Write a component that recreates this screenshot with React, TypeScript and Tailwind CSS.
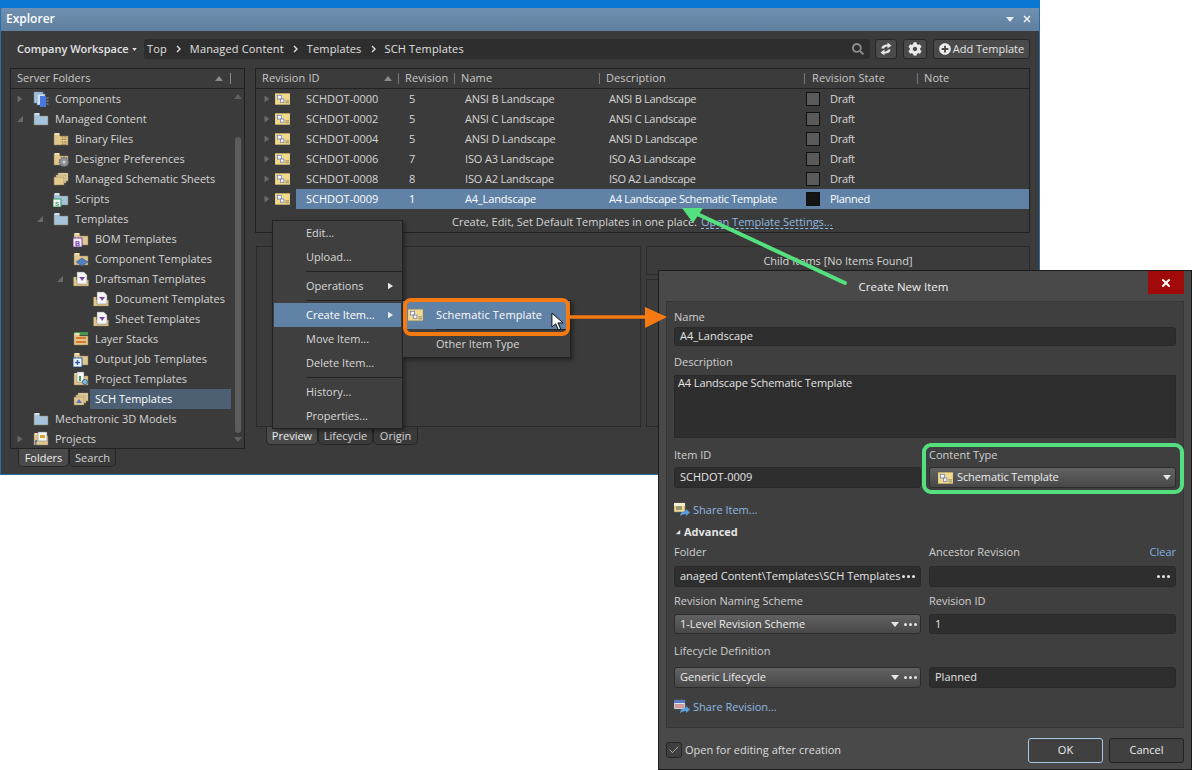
import { Check, X } from "lucide-react";
import { FaCog, FaPlusCircle, FaSearch } from "react-icons/fa";

const Tri = ({ open, fill = "#6a6a6a", className = "w-2 h-2" }: { open?: boolean; fill?: string; className?: string }) => (
  <svg viewBox="0 0 8 8" className={`shrink-0 ${className}`}>
    {open ? <polygon points="7,1 7,7 1,7" fill={fill} /> : <polygon points="1.5,0.5 6.5,4 1.5,7.5" fill={fill} />}
  </svg>
);

const Folder = ({ color = "#e0c78e", tab = "#f0dfb2" }: { color?: string; tab?: string }) => (
  <>
    <path d="M1 3h5l1 2h8v9H1z" fill={color} stroke="#8a7a55" strokeWidth="0.5" />
    <rect x="1.5" y="2" width="5" height="2" fill={tab} />
  </>
);

const TreeIcon = ({ kind }: { kind: string }) => (
  <svg viewBox="0 0 16 16" className="w-4 h-4 shrink-0">
    {kind === "components" && (
      <>
        <rect x="1" y="1" width="9" height="11" fill="#a9c6de" stroke="#5f7f9c" strokeWidth="0.5" />
        <rect x="4" y="3" width="8" height="11" fill="#cfe0ee" stroke="#5f7f9c" strokeWidth="0.5" />
        <rect x="7" y="5" width="6" height="11" fill="#4a78e0" />
        <path d="M13.5 7h2M13.5 10h2M13.5 13h2" stroke="#9aa" strokeWidth="1" />
      </>
    )}
    {kind === "blue" && <Folder color="#a5c4dc" tab="#cfe2f0" />}
    {kind === "binary" && (
      <>
        <Folder />
        <text x="8" y="9" fontSize="5" fill="#8a6a2a" fontFamily="Liberation Sans">10</text>
        <text x="8" y="14" fontSize="5" fill="#8a6a2a" fontFamily="Liberation Sans">10</text>
      </>
    )}
    {kind === "prefs" && (
      <>
        <Folder />
        <circle cx="11" cy="11" r="4.5" fill="#8f9499" stroke="#5b5f63" strokeWidth="1.5" strokeDasharray="1.5 1" />
        <circle cx="11" cy="11" r="1.5" fill="#c8ccd0" />
      </>
    )}
    {kind === "sheets" && (
      <>
        <rect x="5" y="2" width="10" height="8" fill="#f1e0b4" stroke="#8a7a55" strokeWidth="0.5" />
        <rect x="3" y="4" width="10" height="8" fill="#ead49c" stroke="#8a7a55" strokeWidth="0.5" />
        <rect x="1" y="6" width="10" height="8" fill="#e3c98f" stroke="#8a7a55" strokeWidth="0.5" />
      </>
    )}
    {kind === "scripts" && (
      <>
        <Folder color="#a5c4dc" tab="#cfe2f0" />
        <rect x="0" y="8" width="8" height="8" fill="#f4f4f4" stroke="#2f9a5f" />
        <text x="2" y="14.5" fontSize="6" fill="#2f9a5f" fontWeight="bold" fontFamily="Liberation Sans">S</text>
      </>
    )}
    {kind === "bom" && (
      <>
        <Folder />
        <rect x="0" y="7" width="9" height="9" fill="#f4f0f8" stroke="#7a3fa8" />
        <text x="2" y="14.5" fontSize="7" fill="#7a3fa8" fontWeight="bold" fontFamily="Liberation Sans">B</text>
      </>
    )}
    {kind === "comp" && (
      <>
        <Folder />
        <polygon points="9,7 15,11 9,15 3,11" fill="#4f7fc4" stroke="#2f4f80" strokeWidth="0.5" />
      </>
    )}
    {kind === "draft" && (
      <>
        <path d="M0.5 6h3v3h12v6H0.5z" fill="#e0c78e" stroke="#8a7a55" strokeWidth="0.5" />
        <path d="M4 1h7l3 3v9H4z" fill="#f6f6f8" stroke="#777" strokeWidth="0.5" />
        <path d="M6 6h6l-3 4-1-2z" fill="#7a3fa8" />
      </>
    )}
    {kind === "layer" && (
      <>
        <rect x="1" y="1" width="14" height="3" fill="#3f9a4f" />
        <Folder />
        <rect x="3" y="6" width="10" height="2" fill="#d9772b" />
        <rect x="3" y="10" width="10" height="2" fill="#d9772b" />
      </>
    )}
    {kind === "output" && (
      <>
        <Folder />
        <rect x="0" y="7" width="9" height="9" fill="#f4f6fa" stroke="#2a5fb0" />
        <path d="M4.5 9v5M2 11.5h5" stroke="#2a5fb0" strokeWidth="1.5" />
      </>
    )}
    {kind === "project" && (
      <>
        <Folder />
        <rect x="4" y="1" width="7" height="10" fill="#f6f6f8" stroke="#777" strokeWidth="0.5" />
        <rect x="6" y="5" width="2" height="5" fill="#3f9a4f" />
        <circle cx="12" cy="11" r="2.5" fill="#8fb8d8" stroke="#3a6a90" />
      </>
    )}
    {kind === "sch" && (
      <>
        <rect x="5" y="2" width="10" height="8" fill="#f1e0b4" stroke="#8a7a55" strokeWidth="0.5" />
        <rect x="3" y="4" width="10" height="8" fill="#ead49c" stroke="#8a7a55" strokeWidth="0.5" />
        <rect x="1" y="6" width="10" height="8" fill="#e3c98f" stroke="#8a7a55" strokeWidth="0.5" />
        <polygon points="6,8 9,12 3,12" fill="#5a6fc0" />
      </>
    )}
    {kind === "projects" && (
      <>
        <Folder />
        <rect x="5" y="1" width="9" height="9" fill="#f6f6f8" stroke="#777" strokeWidth="0.5" />
        <rect x="7" y="4" width="5" height="3" fill="#d9a62b" />
        <text x="1.5" y="14" fontSize="7" fill="#2a5fb0" fontWeight="bold" fontFamily="Liberation Sans">f</text>
      </>
    )}
  </svg>
);

const SchIcon = () => (
  <svg viewBox="0 0 16 12" className="w-[15px] h-[12px] shrink-0">
    <rect x="0" y="0" width="16" height="12" fill="#f0d98c" stroke="#c4a85e" strokeWidth="0.5" />
    <rect x="2.5" y="2" width="4.5" height="4" fill="#f7f7f7" stroke="#5a6cb8" strokeWidth="0.7" />
    <rect x="6" y="6" width="3.5" height="3.5" fill="#f7f7f7" stroke="#5a6cb8" strokeWidth="0.7" />
    <path d="M11 8h4M11 10h4" stroke="#666" strokeWidth="0.7" />
  </svg>
);

const ShareIcon = ({ calendar }: { calendar?: boolean }) => (
  <svg viewBox="0 0 17 16" className="w-[17px] h-4 shrink-0">
    <rect x="0" y="1" width="11" height="9" fill={calendar ? "#dfe6f2" : "#f0d98c"} stroke="#777" strokeWidth="0.5" />
    <rect x="0" y="1" width="11" height="3" fill={calendar ? "#5a7ac8" : "#f6efd0"} />
    {calendar ? <path d="M1 6h9M1 8h9" stroke="#c0504d" /> : <path d="M2 5h6M2 7h6" stroke="#555" />}
    <path d="M6 15c0-4 2-6 6-6V7l4 3.5-4 3.5v-2c-3 0-4 1-6 2z" fill="#5aa0e0" />
  </svg>
);

const Dots = () => (
  <span className="flex gap-[2px] shrink-0">
    <i className="w-[3px] h-[3px] rounded-full bg-[#e6e6e6]" />
    <i className="w-[3px] h-[3px] rounded-full bg-[#e6e6e6]" />
    <i className="w-[3px] h-[3px] rounded-full bg-[#e6e6e6]" />
  </span>
);

const Caret = () => (
  <svg viewBox="0 0 8 5" className="w-2 h-[5px] shrink-0">
    <polygon points="0,0 8,0 4,5" fill="#e6e6e6" />
  </svg>
);

const Crumb = () => (
  <svg viewBox="0 0 5 8" className="w-[5px] h-2 shrink-0">
    <path d="M1 1l3 3-3 3" fill="none" stroke="#e0e0e0" strokeWidth="1.4" />
  </svg>
);

const indents = ["pl-[5px]", "pl-[25px]", "pl-[45px]", "pl-[65px]"];

const tree = [
  { label: "Components", level: 0, icon: "components", arrow: "closed" },
  { label: "Managed Content", level: 0, icon: "blue", arrow: "open" },
  { label: "Binary Files", level: 1, icon: "binary" },
  { label: "Designer Preferences", level: 1, icon: "prefs" },
  { label: "Managed Schematic Sheets", level: 1, icon: "sheets" },
  { label: "Scripts", level: 1, icon: "scripts" },
  { label: "Templates", level: 1, icon: "blue", arrow: "open" },
  { label: "BOM Templates", level: 2, icon: "bom" },
  { label: "Component Templates", level: 2, icon: "comp" },
  { label: "Draftsman Templates", level: 2, icon: "draft", arrow: "open" },
  { label: "Document Templates", level: 3, icon: "draft" },
  { label: "Sheet Templates", level: 3, icon: "draft" },
  { label: "Layer Stacks", level: 2, icon: "layer" },
  { label: "Output Job Templates", level: 2, icon: "output" },
  { label: "Project Templates", level: 2, icon: "project" },
  { label: "SCH Templates", level: 2, icon: "sch", selected: true },
  { label: "Mechatronic 3D Models", level: 0, icon: "blue" },
  { label: "Projects", level: 0, icon: "projects", arrow: "closed" },
];

const revisions = [
  ["SCHDOT-0000", "5", "ANSI B Landscape", "ANSI B Landscape", "Draft"],
  ["SCHDOT-0002", "5", "ANSI C Landscape", "ANSI C Landscape", "Draft"],
  ["SCHDOT-0004", "5", "ANSI D Landscape", "ANSI D Landscape", "Draft"],
  ["SCHDOT-0006", "7", "ISO A3 Landscape", "ISO A3 Landscape", "Draft"],
  ["SCHDOT-0008", "8", "ISO A2 Landscape", "ISO A2 Landscape", "Draft"],
  ["SCHDOT-0009", "1", "A4_Landscape", "A4 Landscape Schematic Template", "Planned"],
];

const HeadCell = ({ label, sort, className }: { label: string; sort?: boolean; className: string }) => (
  <div className={`h-full flex items-center justify-between ${className}`}>
    {label}
    <span className="flex items-center gap-[6px]">
      {sort && (
        <svg viewBox="0 0 8 5" className="w-2 h-[5px]">
          <polygon points="0,5 8,5 4,0" fill="#8a8a8a" />
        </svg>
      )}
      <i className="w-px h-[11px] bg-[#777]" />
    </span>
  </div>
);

const Tab = ({ label, active, className = "" }: { label: string; active?: boolean; className?: string }) => (
  <div
    className={`h-[18px] flex items-center justify-center pt-px rounded-b-[5px] border border-t-0 border-[#262626] text-[11px] ${active ? "bg-[#4a4a4a] text-[#eeeeee]" : "bg-[#3a3a3a] text-[#d4d4d4]"} ${className}`}
  >
    {label}
  </div>
);

const MenuItem = ({ label, arrow, active }: { label: string; arrow?: boolean; active?: boolean }) => (
  <div className={`h-6 mx-px flex items-center justify-between pl-[32px] pr-[8px] ${active ? "bg-[#5f82a6] text-white" : "text-[#d8d8d8]"}`}>
    {label}
    {arrow && (
      <svg viewBox="0 0 6 8" className="w-[5px] h-2">
        <polygon points="0,0 6,4 0,8" fill="#ececec" />
      </svg>
    )}
  </div>
);

const MenuSep = () => <div className="h-px ml-[33px] bg-[#222] my-[2px]" />;

const Label = ({ children, className = "" }: { children: React.ReactNode; className?: string }) => (
  <div className={`text-[11px] leading-[14px] text-[#cfcfcf] ${className}`}>{children}</div>
);

const Field = ({ children, className = "" }: { children?: React.ReactNode; className?: string }) => (
  <div className={`flex items-center justify-between pl-[5px] pr-[5px] bg-[#2e2e2e] border border-[#292929] rounded-[3px] text-[11px] text-[#e4e4e4] ${className}`}>
    {children}
  </div>
);

const SelectField = ({ children, className = "" }: { children?: React.ReactNode; className?: string }) => (
  <div className={`flex items-center justify-between pl-[5px] pr-[3px] bg-gradient-to-b from-[#626262] to-[#484848] border border-[#2c2c2c] rounded-[3px] text-[11px] text-[#ececec] ${className}`}>
    {children}
  </div>
);

export default function App() {
  return (
    <div className="relative w-[1192px] h-[770px] overflow-hidden bg-white font-['Open_Sans','Noto_Sans',sans-serif] text-[11px] text-[#d6d6d6]">
      {/* Explorer panel */}
      <div className="w-[1040px] h-[475px] flex flex-col bg-[#3b3b3b] border-x border-b border-[#2a6ea8]">
        <div className="h-2 -mx-px bg-[#0a78d2]" />
        <div className="h-[23px] flex items-center justify-between pl-[5px] pr-[7px] pb-px bg-gradient-to-b from-[#6f90b0] to-[#5f7f9f]">
          <span className="font-semibold text-[12px] text-white">Explorer</span>
          <div className="flex items-center gap-[8px]">
            <svg viewBox="0 0 8 5" className="w-2 h-[5px]">
              <polygon points="0,0 8,0 4,5" fill="#ececec" />
            </svg>
            <X className="w-[10px] h-[10px] text-[#ececec]" strokeWidth={4} />
          </div>
        </div>

        <div className="flex-1 flex flex-col pl-[9px] pr-[9px] pt-2">
          {/* toolbar */}
          <div className="h-5 flex items-center">
            <div className="w-[134px] shrink-0 pl-[7px] flex items-center gap-[3px] text-[11px] font-semibold text-[#e2e2e2]">
              Company Workspace
              <svg viewBox="0 0 6 4" className="w-[5px] h-[3px]">
                <polygon points="0,0 6,0 3,4" fill="#e2e2e2" />
              </svg>
            </div>
            <div className="w-[726px] shrink-0 h-5 flex items-center gap-[9px] pl-[3px] pr-[6px] bg-[#2e2e2e] rounded-[3px] text-[#e0e0e0] tracking-[0.15px]">
              <span>Top</span>
              <Crumb />
              <span>Managed Content</span>
              <Crumb />
              <span>Templates</span>
              <Crumb />
              <span>SCH Templates</span>
              <FaSearch className="ml-auto w-[12px] h-[12px] text-[#8a8a8a]" />
            </div>
            <div className="ml-[5px] w-[22px] h-5 shrink-0 flex items-center justify-center bg-[#4a4a4a] border border-[#262626] rounded-[3px]">
              <svg viewBox="0 0 12 14" className="w-3 h-[14px]">
                <path d="M1.5 6.5C1.5 3.5 4.5 2.5 7.5 2.5V0.5L11.5 3.5L7.5 6.5V4.5C6 4.5 4.5 5 4 6.5z" fill="#e6e6e6" />
                <path d="M10.5 7.5C10.5 10.5 7.5 11.5 4.5 11.5V13.5L0.5 10.5L4.5 7.5V9.5C6 9.5 7.5 9 8 7.5z" fill="#e6e6e6" />
              </svg>
            </div>
            <div className="ml-[6px] w-[24px] h-5 shrink-0 flex items-center justify-center bg-[#4a4a4a] border border-[#262626] rounded-[3px]">
              <FaCog className="w-[14px] h-[14px] text-[#ececec]" />
            </div>
            <div className="ml-[6px] w-[97px] h-5 shrink-0 flex items-center justify-center gap-[2px] bg-[#4a4a4a] border border-[#262626] rounded-[3px] text-[#e4e4e4]">
              <FaPlusCircle className="w-3 h-3 text-[#ececec]" />
              Add Template
            </div>
          </div>

          <div className="flex gap-[10px] mt-[9px]">
            {/* server folders */}
            <div className="w-[235px] shrink-0">
              <div className="h-[381px] border border-[#222] bg-[#3b3b3b]">
                <div className="h-5 flex items-center justify-between pl-[6px] pr-[13px] border-b border-[#222] text-[#c8c8c8]">
                  Server Folders
                  <span className="flex items-center gap-[7px] h-full">
                    <svg viewBox="0 0 8 5" className="w-2 h-[5px]">
                      <polygon points="0,5 8,5 4,0" fill="#8a8a8a" />
                    </svg>
                    <i className="w-px h-[11px] bg-[#888]" />
                  </span>
                </div>
                <div className="flex">
                  <div className="w-[220px]">
                    {tree.map((t) => (
                      <div key={t.label} className={`h-5 flex items-center ${indents[t.level]}`}>
                        <span className="w-[11px] shrink-0">
                          {t.arrow && <Tri open={t.arrow === "open"} />}
                        </span>
                        <span className="ml-[6px]">
                          <TreeIcon kind={t.icon} />
                        </span>
                        <span className={`ml-px h-5 flex items-center pl-[5px] flex-1 ${t.selected ? "bg-[#4c5f73] text-white" : ""}`}>
                          {t.label}
                        </span>
                      </div>
                    ))}
                  </div>
                  <div className="w-[13px] flex flex-col items-center pt-[5px]">
                    <svg viewBox="0 0 8 5" className="w-2 h-[5px]">
                      <polygon points="0,5 8,5 4,0" fill="#5f5f5f" />
                    </svg>
                    <div className="w-[6px] h-[296px] mt-[38px] rounded-full bg-[#5c5c5c]" />
                    <svg viewBox="0 0 8 5" className="w-2 h-[5px] mt-[4px]">
                      <polygon points="0,0 8,0 4,5" fill="#5f5f5f" />
                    </svg>
                  </div>
                </div>
              </div>
              <div className="flex pl-2">
                <Tab label="Folders" active className="w-[51px]" />
                <Tab label="Search" className="w-[47px]" />
              </div>
            </div>

            {/* revision list */}
            <div className="flex-1 min-w-0">
              <div className="h-[165px] border border-[#222]">
                <div className="h-5 flex items-center border-b border-[#222] text-[#c8c8c8] tracking-[0.1px]">
                  <HeadCell label="Revision ID" sort className="w-[144px] pl-[6px] pr-px" />
                  <HeadCell label="Revision" className="w-[55px] pl-[5px]" />
                  <HeadCell label="Name" className="w-[145px] pl-[6px]" />
                  <HeadCell label="Description" className="w-[205px] pl-[6px]" />
                  <HeadCell label="Revision State" className="w-[113px] pl-[7px]" />
                  <div className="pl-[6px]">Note</div>
                </div>
                {revisions.map((r, i) => {
                  const sel = i === 5;
                  return (
                    <div key={r[0]} className="h-5 flex items-center">
                      <div className="w-[40px] shrink-0 flex items-center pl-[7px] gap-[4px]">
                        <Tri />
                        <SchIcon />
                      </div>
                      <div className={`flex-1 h-5 flex items-center ${sel ? "bg-[#5f82a6] text-white" : ""}`}>
                        <span className="w-[104px] pl-[10px]">{r[0]}</span>
                        <span className="w-[55px] pl-[9px]">{r[1]}</span>
                        <span className="w-[154px] pl-[10px] tracking-[-0.15px]">{r[2]}</span>
                        <span className="w-[197px] tracking-[-0.3px]">{r[3]}</span>
                        <span className={`w-[14px] h-[14px] border border-[#111] ${sel ? "bg-[#141414]" : "bg-[#5a5a5a]"}`} />
                        <span className="ml-[10px] tracking-[-0.3px]">{r[4]}</span>
                      </div>
                    </div>
                  );
                })}
                <div className="h-6 flex items-center pl-[196px] pt-[2px]">
                  Create, Edit, Set Default Templates in one place.
                  <span className="ml-1 text-[#8fb8e0] border-b border-dashed border-[#8fb8e0] leading-[13px]">Open Template Settings...</span>
                </div>
              </div>

              <div className="mt-[13px] flex gap-[5px] h-[181px]">
                <div className="w-[385px] border border-[#2a2a2a] ml-px" />
                <div className="flex-1 flex flex-col gap-[4px]">
                  <div className="h-[29px] border border-[#2a2a2a] flex items-center justify-center pt-px">Child Items [No Items Found]</div>
                  <div className="flex-1 border border-[#2a2a2a]" />
                </div>
              </div>
              <div className="flex pl-[11px]">
                <Tab label="Preview" active className="w-[52px]" />
                <Tab label="Lifecycle" className="w-[55px]" />
                <Tab label="Origin" className="w-[45px]" />
              </div>
            </div>
          </div>
        </div>
      </div>

      {/* context menu */}
      <div className="absolute left-[272px] top-[220px] w-[131px] h-[209px] bg-[#3f3f3f] border border-[#222] shadow-[2px_2px_4px_rgba(0,0,0,0.4)]">
        <MenuItem label="Edit..." />
        <MenuItem label="Upload..." />
        <MenuSep />
        <MenuItem label="Operations" arrow />
        <MenuSep />
        <MenuItem label="Create Item..." arrow active />
        <MenuItem label="Move Item..." />
        <MenuItem label="Delete Item..." />
        <MenuSep />
        <MenuItem label="History..." />
        <MenuItem label="Properties..." />
      </div>

      {/* submenu */}
      <div className="absolute left-[402px] top-[300px] w-[169px] h-[58px] bg-[#3f3f3f] border border-[#222] shadow-[2px_2px_4px_rgba(0,0,0,0.4)]">
        <div className="h-[28px] flex items-center bg-[#5f82a6] text-white pl-[5px]">
          <SchIcon />
          <span className="ml-[13px] tracking-[0.15px]">Schematic Template</span>
        </div>
        <div className="h-px ml-[33px] bg-[#222]" />
        <div className="h-[28px] flex items-center pl-[33px]">Other Item Type</div>
      </div>
      <div className="absolute left-[403px] top-[298px] w-[167px] h-[38px] rounded-[8px] border-4 border-[#f47a11]" />
      <svg viewBox="0 0 14 20" className="absolute left-[551px] top-[312px] w-[13px] h-[19px]">
        <polygon points="1,1 1,16 5,12.5 8,19 10.5,18 7.5,11.5 13,11.5" fill="#fff" stroke="#000" strokeWidth="1" />
      </svg>

      {/* dialog */}
      <div className="absolute left-[658px] top-[270px] w-[534px] h-[500px] bg-[#494949] border border-[#1c1c1c] flex flex-col">
        <div className="h-[30px] shrink-0 relative flex items-center justify-center pr-[43px] pt-[2px] text-[11.5px] text-[#f0f0f0]">
          Create New Item
          <div className="absolute right-[7px] top-0 w-9 h-[23px] bg-[#a10a0a] flex items-center justify-center">
            <X className="w-3 h-3 text-white" strokeWidth={4} />
          </div>
        </div>

        <div className="mx-[7px] h-[427px] bg-[#3f3f3f] border border-[#363636] px-[7px]">
          <Label className="mt-[8px]">Name</Label>
          <Field className="mt-[3px] h-[19px]">A4_Landscape</Field>
          <Label className="mt-[9px]">Description</Label>
          <div className="mt-[6px] h-[63px] bg-[#2e2e2e] border border-[#292929] pl-[3px] leading-[14px] tracking-[-0.1px] text-[#e4e4e4]">A4 Landscape Schematic Template</div>

          <div className="mt-[10px] grid grid-cols-2 gap-x-2">
            <Label>Item ID</Label>
            <Label>Content Type</Label>
            <Field className="mt-[5px] h-[21px]">SCHDOT-0009</Field>
            <SelectField className="mt-[5px] h-[21px] pl-[8px] pr-[4px]">
              <span className="flex items-center gap-[4px] tracking-[-0.1px]">
                <SchIcon />
                Schematic Template
              </span>
              <Caret />
            </SelectField>
          </div>

          <div className="mt-[14px] h-4 flex items-center gap-[2px] text-[#8fb8e0]">
            <ShareIcon />
            Share Item...
          </div>
          <div className="mt-[6px] h-4 flex items-center gap-[3px] pl-[1px] font-bold text-[#e4e4e4]">
            <Tri open fill="#e4e4e4" className="w-[6px] h-[6px]" />
            Advanced
          </div>

          <div className="mt-[5px] grid grid-cols-2 gap-x-2">
            <Label>Folder</Label>
            <Label className="flex justify-between">
              Ancestor Revision
              <span className="text-[#7fb0e0]">Clear</span>
            </Label>
            <Field className="mt-[7px] h-[21px] pr-[3px]">
              anaged Content\Templates\SCH Templates
              <Dots />
            </Field>
            <Field className="mt-[7px] h-[21px]">
              <span />
              <Dots />
            </Field>
          </div>

          <div className="mt-[7px] grid grid-cols-2 gap-x-2">
            <Label>Revision Naming Scheme</Label>
            <Label>Revision ID</Label>
            <SelectField className="mt-[6px] h-[20px]">
              1-Level Revision Scheme
              <span className="flex items-center gap-[5px]">
                <Caret />
                <Dots />
              </span>
            </SelectField>
            <Field className="mt-[6px] h-[20px]">1</Field>
          </div>

          <Label className="mt-[10px]">Lifecycle Definition</Label>
          <div className="mt-[9px] grid grid-cols-2 gap-x-2">
            <SelectField className="h-[21px]">
              Generic Lifecycle
              <span className="flex items-center gap-[5px]">
                <Caret />
                <Dots />
              </span>
            </SelectField>
            <Field className="h-[21px]">Planned</Field>
          </div>

          <div className="mt-[11px] h-4 flex items-center gap-[2px] text-[#8fb8e0]">
            <ShareIcon calendar />
            Share Revision...
          </div>
        </div>

        <div className="mx-[7px] flex-1 flex items-center justify-between pt-[3px]">
          <div className="flex items-center gap-[3px] text-[#dcdcdc]">
            <span className="w-4 h-4 flex items-center justify-center bg-[#3f3f3f] border border-[#262626] rounded-[3px]">
              <Check className="w-3 h-3 text-[#cfcfcf]" strokeWidth={1.5} />
            </span>
            Open for editing after creation
          </div>
          <div className="flex gap-[6px]">
            <div className="w-[75px] h-[25px] flex items-center justify-center bg-[#404040] border border-[#a9c8e4] rounded-[3px] text-[#ececec]">OK</div>
            <div className="w-[75px] h-[25px] flex items-center justify-center bg-[#404040] border border-[#222] rounded-[3px] text-[#ececec]">Cancel</div>
          </div>
        </div>
      </div>

      {/* green highlight round Content Type */}
      <div className="absolute left-[922px] top-[443px] w-[262px] h-[51px] rounded-[9px] border-4 border-[#55e07f]" />

      {/* callout arrows */}
      <svg viewBox="0 0 1192 770" className="absolute inset-0 w-[1192px] h-[770px] pointer-events-none">
        <path d="M569 317H648" stroke="#f47a11" strokeWidth="3.5" />
        <polygon points="645,307 667,317 645,328" fill="#f47a11" />
        <path d="M845 283L693 212" stroke="#55e07f" strokeWidth="4" strokeLinecap="round" />
        <polygon points="682,208 703,208 693,223" fill="#55e07f" />
      </svg>
    </div>
  );
}
